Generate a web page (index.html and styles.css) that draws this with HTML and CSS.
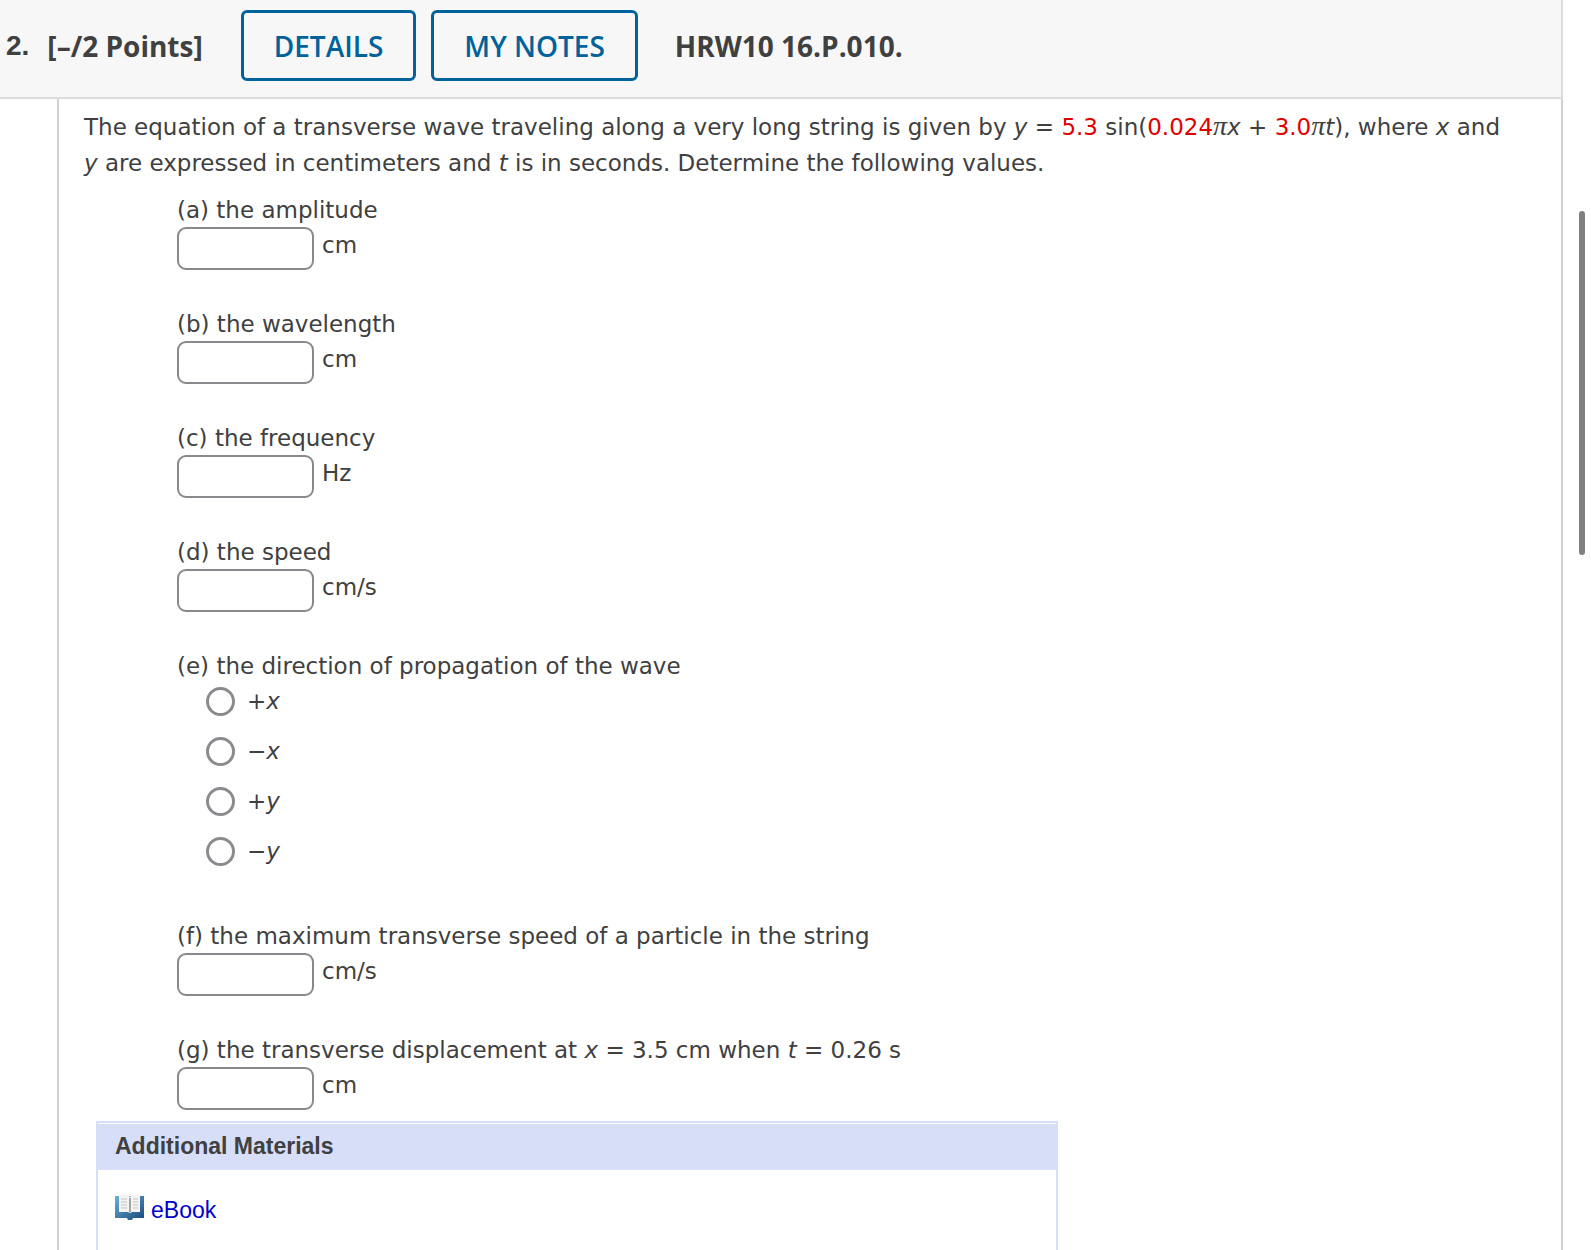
FILE: index.html
```html
<!DOCTYPE html>
<html lang="en">
<head>
  <meta charset="UTF-8">
  <meta name="viewport" content="width=device-width, initial-scale=1">
  <title>HRW10 16.P.010.</title>
  <link rel="stylesheet" href="styles.css">
</head>
<body>

  <main class="question">
    <header class="question-header">
      <span class="number">2.</span>
      <span class="points">[–/2 Points]</span>
      <button type="button" class="details">DETAILS</button>
      <button type="button" class="notes">MY NOTES</button>
      <h1>HRW10 16.P.010.</h1>
    </header>

    <div class="question-body">
      <p class="prompt">The equation of a transverse wave traveling along a very long string is given by <i>y</i> = <span class="value">5.3</span> sin(<span class="value">0.024</span><i class="pi">π</i><i>x</i> + <span class="value">3.0</span><i class="pi">π</i><i>t</i>), where <i>x</i> and <i>y</i>&nbsp;are expressed in centimeters and <i>t</i> is in seconds. Determine the following values.</p>

      <form class="parts">
        <div class="part">
          <label for="a">(a) the amplitude</label>
          <div class="answer"><input type="text" id="a"><span>cm</span></div>
        </div>
        <div class="part">
          <label for="b">(b) the wavelength</label>
          <div class="answer"><input type="text" id="b"><span>cm</span></div>
        </div>
        <div class="part">
          <label for="c">(c) the frequency</label>
          <div class="answer"><input type="text" id="c"><span>Hz</span></div>
        </div>
        <div class="part">
          <label for="d">(d) the speed</label>
          <div class="answer"><input type="text" id="d"><span>cm/s</span></div>
        </div>
        <fieldset class="part">
          <legend>(e) the direction of propagation of the wave</legend>
          <div class="choices">
            <label><input type="radio" name="direction"><span>+<i>x</i></span></label>
            <label><input type="radio" name="direction"><span>−<i>x</i></span></label>
            <label><input type="radio" name="direction"><span>+<i>y</i></span></label>
            <label><input type="radio" name="direction"><span>−<i>y</i></span></label>
          </div>
        </fieldset>
        <div class="part">
          <label for="f">(f) the maximum transverse speed of a particle in the string</label>
          <div class="answer"><input type="text" id="f"><span>cm/s</span></div>
        </div>
        <div class="part">
          <label for="g">(g) the transverse displacement at <i>x</i> = 3.5 cm when <i>t</i> = 0.26 s</label>
          <div class="answer"><input type="text" id="g"><span>cm</span></div>
        </div>
      </form>

      <section class="materials">
        <h2>Additional Materials</h2>
        <div class="material">
          <svg width="30" height="26" viewBox="0 0 30 26" aria-hidden="true">
            <defs>
              <linearGradient id="cover" x1="0" y1="0" x2="1" y2="1">
                <stop offset="0" stop-color="#6bb0d8"/>
                <stop offset="1" stop-color="#174a7c"/>
              </linearGradient>
            </defs>
            <path d="M0 2h29v22H18l-1 2h-4l-1-2H0z" fill="url(#cover)"/>
            <path d="M4 1c4-1 8-1 11 2 3-3 7-3 10-2v17H17l-2 1-2-1H4z" fill="#f4f4f2"/>
            <path d="M14 4h2v14h-2z" fill="#a4a4a4"/>
            <path d="M6 5h6M6 8h6M6 11h6M6 14h6M18 5h5M18 8h5M18 11h5M18 14h5" stroke="#c4c4c4"/>
          </svg>
          <a href="#ebook">eBook</a>
        </div>
      </section>
    </div>
  </main>

  <div class="scroll-thumb"></div>

</body>
</html>
```
FILE: styles.css
```css
* {
  box-sizing: border-box;
}

body {
  font-family: Verdana, "DejaVu Sans", sans-serif;
  font-size: 23px;
  line-height: 36px;
  color: #404040;
  background: #fff;
  margin: 0;
}

.question {
  display: flex;
  flex-direction: column;
  min-height: 100vh;
  margin-right: 28px;
}

.question-header {
  display: flex;
  align-items: center;
  padding: 10px 6px 16px;
  background: #f7f7f7;
  border-right: 2px solid #ddd;
  border-bottom: 2px solid #ddd;
  font-family: "Open Sans", sans-serif;
  font-size: 28px;
  font-weight: 700;
}

.number {
  font-family: "Liberation Sans", Arial, sans-serif;
  margin-right: 18px;
}

.points {
  margin-right: 38px;
}

button {
  height: 71px;
  padding: 0 30px;
  font-family: inherit;
  font-size: 28px;
  font-weight: 600;
  line-height: 36px;
  color: #00629b;
  background: transparent;
  border: 3px solid #00629b;
  border-radius: 6px;
  cursor: pointer;
}

.notes {
  margin-left: 15px;
}

h1 {
  margin: 0 0 0 37px;
  font-size: 28px;
}

.question-body {
  flex: 1;
  display: flex;
  flex-direction: column;
  margin-left: 57px;
  padding: 10px 24px 0 25px;
  border-left: 2px solid #d0d0d0;
  border-right: 2px solid #d0d0d0;
}

.prompt {
  margin: 0 0 11px;
}

.value {
  color: #e00000;
}

.pi {
  font-family: "Liberation Serif", "Times New Roman", serif;
  font-size: 28px;
  line-height: 1;
}

.parts {
  display: flex;
  flex-direction: column;
  gap: 43px;
  margin-left: 93px;
}

.part {
  margin: 0;
  padding: 0;
  border: 0;
}

.part > label,
legend {
  display: block;
  padding: 0;
}

.answer {
  display: flex;
  gap: 8px;
  height: 36px;
  margin-top: -1px;
}

.answer input {
  width: 137px;
  height: 43px;
  padding: 0 8px;
  font: inherit;
  border: 2px solid #88888d;
  border-radius: 9px;
}

.choices {
  display: flex;
  flex-direction: column;
  gap: 14px;
  margin: -1px 0 6px 29px;
}

.choices label {
  display: flex;
  align-items: center;
  gap: 12px;
}

.choices input {
  appearance: none;
  width: 29px;
  height: 29px;
  margin: 0;
  background: #fff;
  border: 3px solid #8a8a8f;
  border-radius: 50%;
}

.choices input:checked {
  background: #00629b;
  box-shadow: inset 0 0 0 5px #fff;
}

.materials {
  flex: 1;
  width: 962px;
  max-width: 100%;
  margin: 18px 0 0 12px;
  padding-top: 1px;
  border: 2px solid #d7def8;
  border-bottom: 0;
  font-family: "Liberation Sans", Arial, sans-serif;
}

h2 {
  margin: 0;
  padding: 4px 17px 6px;
  font-size: 23px;
  background: #d7def7;
}

.material {
  display: flex;
  align-items: center;
  gap: 6px;
  padding: 22px 17px 0;
}

.material svg {
  margin-bottom: 6px;
}

.material a {
  color: #0000cd;
  text-decoration: none;
}

/* overlay scroll indicator */
.scroll-thumb {
  position: fixed;
  top: 211px;
  right: 6px;
  width: 6px;
  height: 344px;
  background: #808080;
  border-radius: 3px;
}
```
